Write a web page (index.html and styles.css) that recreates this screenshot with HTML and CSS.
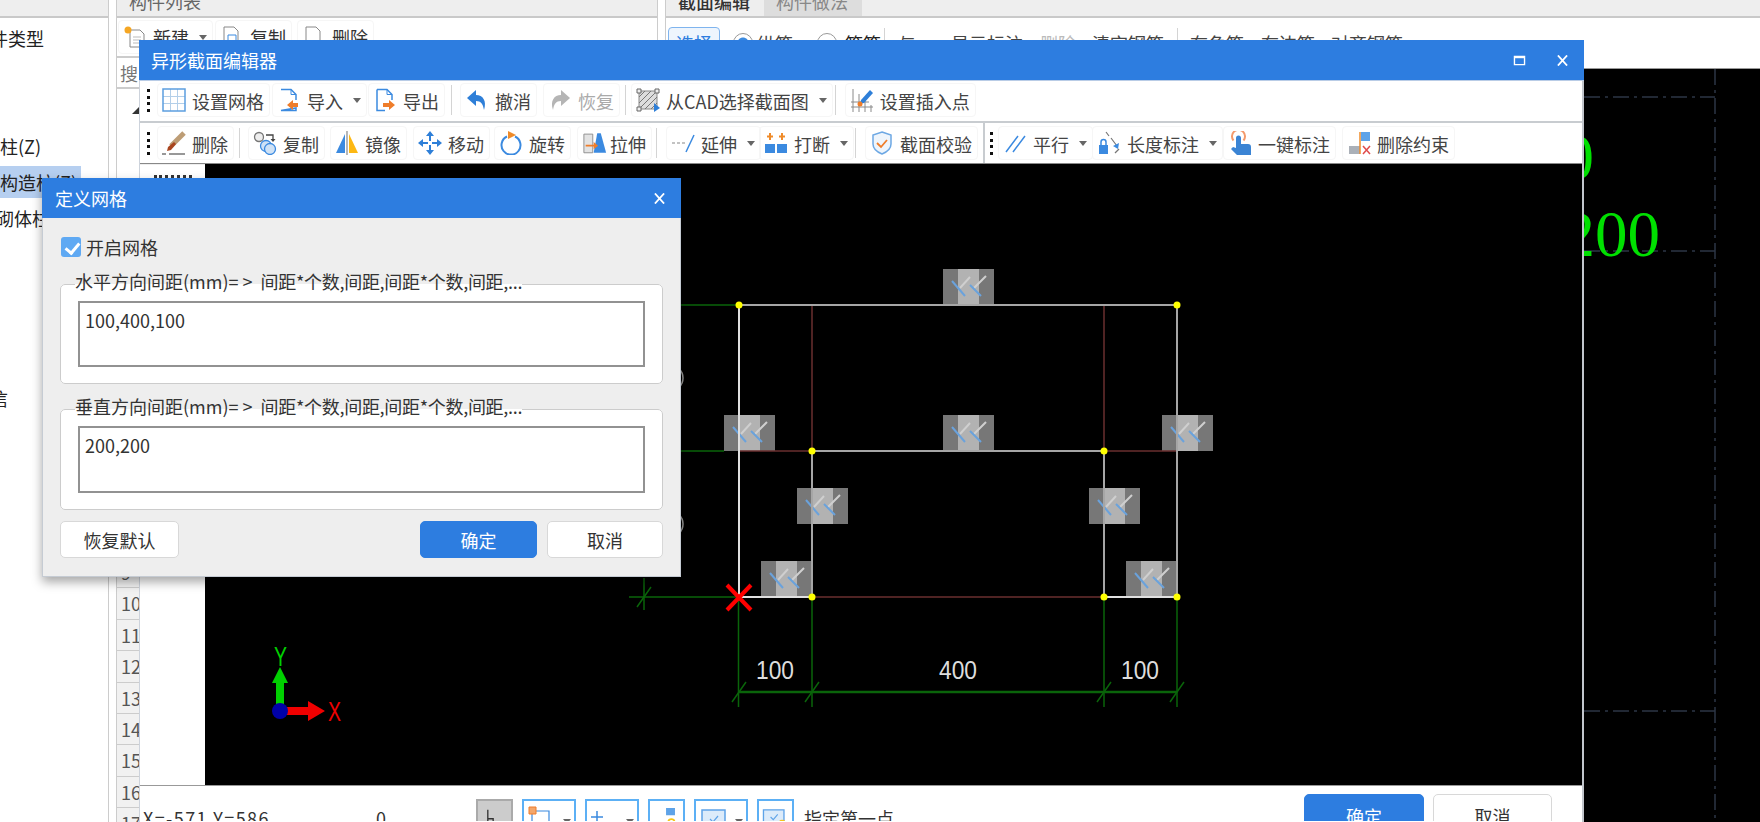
FILE: index.html
```html
<!DOCTYPE html>
<html lang="zh-CN">
<head>
    <meta charset="UTF-8">
    <title>异形截面编辑器</title>
    <link rel="stylesheet" href="styles.css">
</head>
<body>
    <!-- Main application behind the two dialogs -->
    <div class="app">
        <div class="type-pane">
            <div class="pane-head"></div>
            <div class="tree">
                <div class="tree-row"><span class="cut-28">构件类型</span></div>
                <div class="tree-row"></div>
                <div class="tree-row"></div>
                <div class="tree-row">柱(Z)</div>
                <div class="tree-row"><span class="tree-sel">构造柱(Z)</span></div>
                <div class="tree-row"><span class="cut-4">砌体柱(Z)</span></div>
                <div class="tree-row"></div>
                <div class="tree-row"></div>
                <div class="tree-row"></div>
                <div class="tree-row"></div>
                <div class="tree-row"><span class="cut-10">信</span></div>
            </div>
        </div>

        <div class="list-pane">
            <div class="pane-head"><span class="pane-title">构件列表</span></div>
            <div class="list-tools">
                <div class="tb-btn">
                    <svg class="icon" viewBox="0 0 24 24"><path d="M7 5h10l4 4v13H7z" fill="#fff" stroke="#888"/><path d="M10 12h8M10 15h8M10 18h8" stroke="#bbb"/><circle cx="5" cy="5" r="3.5" fill="#f5a623"/></svg>
                    <span>新建</span><i class="caret"></i>
                </div>
                <div class="tb-btn ml2">
                    <svg class="icon" viewBox="0 0 24 24"><path d="M4 2h10l4 4v16H4z" fill="#fff" stroke="#888"/><path d="M8 10h8v10H8z" fill="#fff" stroke="#3b8ae0"/></svg>
                    <span>复制</span>
                </div>
                <div class="tb-btn ml5">
                    <svg class="icon" viewBox="0 0 24 24"><path d="M4 2h10l4 4v16H4z" fill="#fff" stroke="#888"/><path d="M10 19h10" stroke="#e04b4b" stroke-width="3"/></svg>
                    <span>删除</span>
                </div>
            </div>
            <div class="search-row">搜</div>
            <div class="tree-top"><i class="tree-arrow"></i></div>
            <div class="num-row">9</div>
            <div class="num-row">10</div>
            <div class="num-row">11</div>
            <div class="num-row">12</div>
            <div class="num-row">13</div>
            <div class="num-row">14</div>
            <div class="num-row">15</div>
            <div class="num-row">16</div>
            <div class="num-row">17</div>
        </div>

        <div class="section-pane">
            <div class="pane-head tabs">
                <span class="tab tab-on">截面编辑</span>
                <span class="tab">构件做法</span>
            </div>
            <div class="section-tools">
                <span class="pick-btn">选择</span>
                <i class="radio radio-on"></i><span>纵筋</span>
                <i class="radio radio-b"></i><span class="ml8b">箍筋</span>
                <i class="v-sep sep-a"></i>
                <span class="ml13">与</span>
                <span class="ml35">显示标注</span>
                <span class="ml17 muted">删除</span>
                <span class="ml16">清空钢筋</span>
                <i class="v-sep sep-b"></i>
                <span class="ml12">布角筋</span>
                <span class="ml17">布边筋</span>
                <span class="ml16">对齐钢筋</span>
            </div>
            <div class="back-canvas">
                <svg class="back-drawing" viewBox="1584 68 176 754">
                    <path class="axis-line" d="M1584 96H1715M1584 250H1715M1584 710H1715M1715 68V822"/>
                    <text class="cad-num" x="1594" y="178" text-anchor="end">0</text>
                    <text class="cad-num" x="1660" y="255" text-anchor="end">200</text>
                </svg>
            </div>
        </div>
    </div>

    <!-- 异形截面编辑器 window -->
    <div class="editor">
        <div class="title-bar">
            <span>异形截面编辑器</span>
            <span class="win-btns">
                <svg class="win-icon" viewBox="0 0 14 12"><path d="M1.5 1.5h11v9h-11z" fill="none" stroke="#fff" stroke-width="1.5"/><path d="M1 2.5h12" stroke="#fff" stroke-width="2"/></svg>
                <svg class="win-icon" viewBox="0 0 14 12"><path d="M2 0.5l10 11M12 0.5l-10 11" stroke="#fff" stroke-width="2"/></svg>
            </span>
        </div>

        <div class="toolbar bar-one">
            <i class="grip"></i>
            <div class="tb-btn">
                <svg class="icon" viewBox="0 0 24 24"><path d="M8.5 1v22M15.5 1v22M1 8.5h22M1 15.5h22" stroke="#b3cfe9"/><path d="M1 1h22v22H1z" fill="none" stroke="#5c9fdf" stroke-width="1.5"/></svg>
                <span>设置网格</span>
            </div>
            <div class="tb-btn ml2">
                <svg class="icon" viewBox="0 0 24 24"><path d="M4 1.500h10l5 5V12M19 20v2.500H4z" fill="none" stroke="#3b8ae0" stroke-width="1.5"/><path d="M14 1.500v5h5" fill="none" stroke="#3b8ae0"/><path d="M21 15h-5v-3l-6 5 6 5v-3h5z" fill="#ef7d2a"/></svg>
                <span>导入</span><i class="caret"></i>
            </div>
            <div class="tb-btn ml1">
                <svg class="icon" viewBox="0 0 24 24"><path d="M4 1.500h10l5 5V12M12 22.500H4v-21" fill="none" stroke="#3b8ae0" stroke-width="1.500"/><path d="M14 1.500v5h5" fill="none" stroke="#3b8ae0"/><path d="M10 15h6v-3l6 5-6 5v-3h-6z" fill="#ef7d2a"/></svg>
                <span>导出</span>
            </div>
            <i class="v-sep tb-sep sep-1"></i>
            <div class="tb-btn">
                <svg class="icon" viewBox="0 0 24 24"><path d="M11 2L2 10l9 8v-5c5 0 7 3 8 9 3-9-1-15-8-15z" fill="#2e7fd8"/></svg>
                <span>撤消</span>
            </div>
            <div class="tb-btn ml6 off">
                <svg class="icon" viewBox="0 0 24 24"><path d="M13 2l9 8-9 8v-5c-5 0-7 3-8 9-3-9 1-15 8-15z" fill="#b5b5b5"/></svg>
                <span>恢复</span>
            </div>
            <i class="v-sep tb-sep sep-2"></i>
            <div class="tb-btn">
                <svg class="icon" viewBox="0 0 24 24"><path d="M3 3h18v18H3z" fill="#ddd" stroke="#888"/><path d="M3 9l6-6M3 15L15 3M3 21L21 3M9 21L21 9M15 21l6-6" stroke="#777"/><path d="M1 1h4v4H1zM19 1h4v4h-4zM1 19h4v4H1z" fill="#eee" stroke="#666"/><path d="M18 15l6 5-6 4z" fill="#2e7fd8"/></svg>
                <span>从CAD选择截面图</span><i class="caret"></i>
            </div>
            <i class="v-sep tb-sep sep-3"></i>
            <div class="tb-btn">
                <svg class="icon" viewBox="0 0 24 24"><path d="M3 1v23M9 6v18M1 14h18M1 19h22M15 13v11M21 17v7" stroke="#8a8a8a"/><path d="M20 2l3 3-9 10-4 1 1-4z" fill="#2e7fd8"/><circle cx="10" cy="16" r="2.500" fill="#ef7d2a"/></svg>
                <span>设置插入点</span>
            </div>
        </div>

        <div class="toolbar bar-two">
            <i class="grip"></i>
            <div class="tb-btn">
                <svg class="icon" viewBox="0 0 24 24"><path d="M22 2L9 15" stroke="#bd9d75" stroke-width="5"/><path d="M12 11l2 2-5 6-4 1 1-4z" fill="#a9451f"/><path d="M0 23h4M7 23h16" stroke="#333" stroke-width="1.200"/></svg>
                <span>删除</span>
            </div>
            <i class="v-sep tb-sep sep-4"></i>
            <div class="tb-btn ml1">
                <svg class="icon" viewBox="0 0 24 24"><circle cx="6" cy="6" r="4.500" fill="#eee" stroke="#777" stroke-width="1.300"/><path d="M13 4h7v4" fill="none" stroke="#444" stroke-width="1.300"/><path d="M17.500 8h5L20 11z" fill="#444"/><circle cx="13" cy="15" r="5.500" fill="#cfe2f6" stroke="#3b8ae0" stroke-width="1.300"/><circle cx="17" cy="18" r="5.500" fill="#cfe2f6" stroke="#3b8ae0" stroke-width="1.300"/></svg>
                <span>复制</span>
            </div>
            <div class="tb-btn ml5">
                <svg class="icon" viewBox="0 0 24 24"><path d="M10 3v19H1z" fill="#3b8ae0"/><path d="M14 3v19h9z" fill="#fdb813"/><path d="M12 0v24" stroke="#888" stroke-width="1.200"/></svg>
                <span>镜像</span>
            </div>
            <div class="tb-btn ml6">
                <svg class="icon" viewBox="0 0 24 24"><path d="M12 0l4 5h-3v5h-2V5H8zM12 24l-4-5h3v-5h2v5h3zM0 12l5-4v3h5v2H5v3zM24 12l-5 4v-3h-5v-2h5V8z" fill="#2e7fd8"/></svg>
                <span>移动</span>
            </div>
            <div class="tb-btn ml4">
                <svg class="icon" viewBox="0 0 24 24"><path d="M8 5.500a9.500 9.500 0 1 0 8 0" fill="none" stroke="#3b8ae0" stroke-width="2"/><path d="M9 0l8 4-8 4z" fill="#ef8b2a"/></svg>
                <span>旋转</span>
            </div>
            <div class="tb-btn ml6">
                <svg class="icon icon-wide" viewBox="0 0 27 24"><path d="M1 2h10v21H1z" fill="#e3e3e3" stroke="#888"/><path d="M16 1h4l6 22H12z" fill="#3b8ae0"/><path d="M3 14h9v-3l5 4-5 4v-3H3z" fill="#ef7d2a"/></svg>
                <span>拉伸</span>
            </div>
            <i class="v-sep tb-sep sep-5"></i>
            <div class="tb-btn">
                <svg class="icon" viewBox="0 0 24 24"><path d="M1 12h14" stroke="#888" stroke-width="1.200" stroke-dasharray="3 2"/><path d="M23 4L15 21" stroke="#3b8ae0" stroke-width="1.500"/></svg>
                <span>延伸</span><i class="caret"></i>
            </div>
            <div class="tb-btn ml-2">
                <svg class="icon" viewBox="0 0 24 24"><path d="M1 13h10v9H1zM13 13h10v9H13z" fill="#3b8ae0"/><path d="M6 2v7M3 5.500h6M18 2v7M15 5.500h6" stroke="#ef8b2a" stroke-width="2"/></svg>
                <span>打断</span><i class="caret"></i>
            </div>
            <i class="v-sep tb-sep sep-6"></i>
            <div class="tb-btn">
                <svg class="icon" viewBox="0 0 24 24"><path d="M12 1l9 3v9c0 5-4 8-9 10-5-2-9-5-9-10V4z" fill="#eef5fc" stroke="#6da8e4" stroke-width="1.500"/><path d="M7 12l4 4 6-7" fill="none" stroke="#ef7d2a" stroke-width="1.800"/></svg>
                <span>截面校验</span>
            </div>
            <i class="bar-split"></i>
            <i class="grip"></i>
            <div class="tb-btn">
                <svg class="icon" viewBox="0 0 24 24"><path d="M3 21L15 5M10 21L22 5" stroke="#3b8ae0" stroke-width="1.500"/></svg>
                <span>平行</span><i class="caret"></i>
            </div>
            <div class="tb-btn ml-1">
                <svg class="icon" viewBox="0 0 24 24"><path d="M2 14h9v9H2z" fill="#3b8ae0"/><path d="M4 14v-3a2.500 2.500 0 0 1 5 0v3" fill="none" stroke="#3b8ae0" stroke-width="1.500"/><path d="M9 1l3 4M14 7l6 8" stroke="#777" stroke-width="1.200"/><path d="M22 12l-1 6-5-3z" fill="#3b8ae0"/><path d="M18 22l4-4" stroke="#777" stroke-width="1.200"/></svg>
                <span>长度标注</span><i class="caret"></i>
            </div>
            <div class="tb-btn">
                <svg class="icon" viewBox="0 0 24 24"><path d="M5.500 9.500a6.500 6.500 0 1 1 10 0" fill="none" stroke="#f49a6c" stroke-width="2"/><path d="M8 7a2.500 2.500 0 0 1 5 0v6h7c2 0 3 1 3 3v8H9l-6-6 2-2 3 1z" fill="#3b84d4"/></svg>
                <span>一键标注</span>
            </div>
            <div class="tb-btn ml6">
                <svg class="icon" viewBox="0 0 24 24"><path d="M2 15h11v8H2z" fill="#aab0b8"/><path d="M13 1v22" stroke="#ef8b2a" stroke-width="1.500"/><path d="M14 1h9v9h-9z" fill="#5ea3e8"/><path d="M16 15l7 8M23 15l-7 8" stroke="#e04b4b" stroke-width="1.500"/></svg>
                <span>删除约束</span>
            </div>
        </div>

        <div class="work-area">
            <div class="side-strip"><i class="side-dots"></i></div>
            <svg class="drawing" viewBox="205 164 1377 621">
                <defs>
                    <g id="tile">
                        <rect width="51" height="36" fill="#777"/>
                        <rect x="15" width="21" height="36" fill="#b2b2b2"/>
                        <path d="M17 19L27 8M31 19L43 7" stroke="#cfcfcf" stroke-width="2"/>
                        <path d="M9 12L22 27M27 16L38 27" stroke="#6aa2dc" stroke-width="2"/>
                    </g>
                </defs>

                <use href="#tile" x="943" y="269"/>
                <use href="#tile" x="724" y="415"/>
                <use href="#tile" x="943" y="415"/>
                <use href="#tile" x="1162" y="415"/>
                <use href="#tile" x="797" y="488"/>
                <use href="#tile" x="1089" y="488"/>
                <use href="#tile" x="761" y="561"/>
                <use href="#tile" x="1126" y="561"/>

                <!-- dimension lines -->
                <path class="dim" d="M600 305H739M600 451H724M629 597H739M644 578V610M738.500 597V707M812 597V707M1104 597V707M1177 597V707"/>
                <path class="dim dim-main" d="M739 692H1177"/>
                <path class="dim" d="M732 702L746 682M805 702L819 682M1097 702L1111 682M1170 702L1184 682M637 607L651 587"/>

                <!-- section outline -->
                <path class="rebar" d="M812 305V451M1104 305V451M739 451H812M1104 451H1177M812 597H1104"/>
                <path class="edge" d="M739 305H1177M1177 305V597M812 451H1104M812 451V597M1104 451V597"/>
                <path class="edge-light" d="M739 305V597M739 597H812M1104 597H1177"/>

                <g class="node">
                    <circle cx="739" cy="305" r="3.500"/>
                    <circle cx="1177" cy="305" r="3.500"/>
                    <circle cx="812" cy="451" r="3.500"/>
                    <circle cx="1104" cy="451" r="3.500"/>
                    <circle cx="812" cy="597" r="3.500"/>
                    <circle cx="1104" cy="597" r="3.500"/>
                    <circle cx="1177" cy="597" r="3.500"/>
                </g>

                <path class="origin" d="M727 585L751 610M751 585L727 610"/>

                <text class="dim-text" x="756" y="679" textLength="38" lengthAdjust="spacingAndGlyphs">100</text>
                <text class="dim-text" x="939" y="679" textLength="38" lengthAdjust="spacingAndGlyphs">400</text>
                <text class="dim-text" x="1121" y="679" textLength="38" lengthAdjust="spacingAndGlyphs">100</text>

                <circle class="bubble" cx="670" cy="378" r="13"/>
                <circle class="bubble" cx="670" cy="524" r="13"/>

                <!-- axis marker -->
                <path d="M276 711V683H272L280 667L288 683H284V711z" fill="#00d000"/>
                <path d="M280 707H308V701L325 711L308 721V715H280z" fill="#f00000"/>
                <ellipse cx="280" cy="711" rx="8" ry="8" fill="#0000a8"/>
                <text class="axis-y" x="274" y="666" textLength="13" lengthAdjust="spacingAndGlyphs">Y</text>
                <text class="axis-x" x="328" y="721" textLength="13" lengthAdjust="spacingAndGlyphs">X</text>
            </svg>
        </div>

        <div class="status-bar">
            <span class="coords">X=-571 Y=586</span>
            <span class="zero">0</span>
            <div class="mode-btn mode-on">
                <svg class="mode-icon" viewBox="0 0 37 24"><path d="M11 4V20M11 14h6v8" fill="none" stroke="#333" stroke-width="1.500"/></svg>
            </div>
            <div class="mode-btn mode-wide">
                <svg class="mode-icon" viewBox="0 0 50 24"><path d="M8 6h17v18H8z" fill="none" stroke="#3b8ae0" stroke-width="1.200"/><path d="M5 2h7v7H5z" fill="#f3a66b" stroke="#ef7d2a"/></svg>
                <i class="caret"></i>
            </div>
            <div class="mode-btn mode-wide">
                <svg class="mode-icon" viewBox="0 0 50 24"><path d="M10 6v12M4 12h12" stroke="#3b8ae0" stroke-width="1.500"/><path d="M14 19h16v6H14z" fill="#5ea3e8"/></svg>
                <i class="caret"></i>
            </div>
            <div class="mode-btn">
                <svg class="mode-icon" viewBox="0 0 37 24"><path d="M18 2h10v8H18zM8 18h12v8H8z" fill="#5ea3e8"/><circle cx="24" cy="18" r="3.500" fill="#fff" stroke="#f5c518" stroke-width="2"/></svg>
            </div>
            <div class="mode-btn mode-wide">
                <svg class="mode-icon" viewBox="0 0 50 24"><path d="M6 5h23v18H6z" fill="#dcebfa" stroke="#5ea3e8" stroke-width="1.500"/><path d="M14 14l3 3 5-6" fill="none" stroke="#5ea3e8" stroke-width="1.200"/></svg>
                <i class="caret"></i>
            </div>
            <div class="mode-btn">
                <svg class="mode-icon" viewBox="0 0 37 24"><path d="M5 4h23v18H5z" fill="#dcebfa" stroke="#5ea3e8" stroke-width="1.500"/><path d="M13 12l3 3 5-6" fill="none" stroke="#5ea3e8" stroke-width="1.200"/><circle cx="26" cy="19" r="4" fill="#f5c518"/></svg>
            </div>
            <span class="prompt">指定第一点</span>
            <button class="btn btn-primary foot-btn foot-ok">确定</button>
            <button class="btn foot-btn foot-no">取消</button>
        </div>
    </div>

    <!-- 定义网格 dialog -->
    <div class="grid-dialog">
        <div class="dialog-title">
            <span>定义网格</span>
            <svg class="win-icon" viewBox="0 0 14 12"><path d="M2 0.500l10 11M12 0.500l-10 11" stroke="#fff" stroke-width="2"/></svg>
        </div>
        <div class="dialog-body">
            <label class="check-row"><i class="check-box"></i>开启网格</label>
            <fieldset class="group group-h">
                <legend>水平方向间距(mm)= &gt;&nbsp; <span class="legend-tail">间距*个数,间距,间距*个数,间距,...</span></legend>
                <textarea class="grid-input">100,400,100</textarea>
            </fieldset>
            <fieldset class="group group-v">
                <legend>垂直方向间距(mm)= &gt;&nbsp; <span class="legend-tail">间距*个数,间距,间距*个数,间距,...</span></legend>
                <textarea class="grid-input">200,200</textarea>
            </fieldset>
            <div class="dialog-foot">
                <button class="btn reset-btn">恢复默认</button>
                <button class="btn btn-primary ok-btn">确定</button>
                <button class="btn cancel-btn">取消</button>
            </div>
        </div>
    </div>
</body>
</html>
```

FILE: styles.css
```css
* {
    box-sizing: border-box;
}
html, body {
    margin: 0;
    height: 100%;
}
body {
    font-family: "Noto Sans CJK SC", "Noto Sans", sans-serif;
    font-size: 18px;
    color: #333;
    background: #fff;
    overflow: hidden;
    position: relative;
}
i {
    display: block;
    font-style: normal;
}

/* Main application */
.app {
    display: flex;
    height: 822px;
    overflow: hidden;
}
.pane-head {
    height: 18px;
    flex: none;
    overflow: hidden;
    background: #eee;
    border-bottom: 2px solid #c9c9c9;
}
.type-pane {
    width: 109px;
    flex: none;
    border-right: 1px solid #ccc;
}
.tree {
    padding-top: 2px;
}
.tree-row {
    height: 36px;
    display: flex;
    align-items: center;
    white-space: nowrap;
    color: #222;
}
.tree-sel {
    display: block;
    width: 81px;
    height: 32px;
    line-height: 32px;
    overflow: hidden;
    background: #b6cff0;
}
.cut-4 {
    margin-left: -4px;
}
.cut-10 {
    margin-left: -10px;
}
.cut-28 {
    margin-left: -28px;
}

.list-pane {
    width: 542px;
    flex: none;
    margin-left: 7px;
    border-left: 1px solid #ccc;
    border-right: 1px solid #ccc;
    overflow: hidden;
}
.pane-title {
    display: block;
    line-height: 2px;
    margin-left: 12px;
    color: #666;
}
.list-tools {
    height: 40px;
    display: flex;
    align-items: center;
    padding-left: 1px;
    border-bottom: 2px solid #ccc;
}
.search-row {
    height: 31px;
    padding-left: 3px;
    line-height: 30px;
    color: #777;
    border-bottom: 2px solid #ccc;
}
.tree-top {
    height: 468px;
    position: relative;
}
.tree-arrow {
    position: absolute;
    left: 15px;
    top: 18px;
    border-style: solid;
    border-width: 0 0 7px 7px;
    border-color: transparent transparent #333 transparent;
}
.num-row {
    height: 31.400px;
    width: 40px;
    padding-left: 4px;
    line-height: 30px;
    background: #f1f1f1;
    border-bottom: 1px solid #ccc;
    color: #555;
}

.section-pane {
    flex: 1;
    margin-left: 7px;
    display: flex;
    flex-direction: column;
    border-left: 1px solid #ccc;
}
.tabs {
    display: flex;
}
.tab {
    width: 98px;
    height: 16px;
    line-height: 2px;
    padding-left: 12px;
    background: #ddd;
    color: #888;
    overflow: hidden;
}
.tab-on {
    background: #eee;
    color: #333;
    font-weight: 500;
}
.section-tools {
    height: 50px;
    display: flex;
    align-items: center;
    flex: none;
    padding-left: 2px;
    white-space: nowrap;
    color: #444;
}
.pick-btn {
    width: 52px;
    height: 32px;
    line-height: 30px;
    text-align: center;
    color: #2d7de0;
    background: #eef5fd;
    border: 1px solid #7fb4ee;
    border-radius: 4px;
}
.radio {
    width: 20px;
    height: 20px;
    margin: 0 4px 0 13px;
    border: 1px solid #999;
    border-radius: 50%;
}
.radio-on {
    background: radial-gradient(circle, #3b8ae0 0 5px, #fff 6px);
}
.radio-b {
    margin-left: 24px;
}
.ml8b {
    margin-left: 4px;
    color: #222;
}
.sep-a {
    margin-left: 3px;
}
.sep-b {
    margin-left: 13px;
}
.ml12 {
    margin-left: 12px;
}
.ml13 {
    margin-left: 13px;
}
.ml16 {
    margin-left: 16px;
}
.ml17 {
    margin-left: 17px;
}
.ml35 {
    margin-left: 35px;
}
.muted {
    color: #bbb;
}
.v-sep {
    width: 1px;
    height: 30px;
    flex: none;
    background: #d4d4d4;
}
.back-canvas {
    flex: 1;
    background: #000;
    position: relative;
    border-top: 1px solid #999;
}
.back-drawing {
    position: absolute;
    right: 0;
    top: 0;
    width: 176px;
    height: 754px;
}
.axis-line {
    fill: none;
    stroke: #2c3646;
    stroke-width: 1.500;
    stroke-dasharray: 16 5 3 5;
}
.cad-num {
    font-family: "Liberation Serif", serif;
    font-size: 65px;
    fill: #00e000;
}

/* Editor window */
.editor {
    position: absolute;
    left: 139px;
    top: 40px;
    width: 1445px;
    height: 782px;
    display: flex;
    flex-direction: column;
    background: #fff;
    border-left: 1px solid #cdd3dc;
    border-right: 2px solid #c2c6cc;
}
.title-bar {
    height: 41px;
    flex: none;
    display: flex;
    align-items: center;
    justify-content: space-between;
    padding: 0 15px 0 12px;
    margin: 0 -2px 0 -1px;
    color: #fff;
    background: #2d7de0;
    border-bottom: 1px solid #b9cce6;
}
.win-btns {
    display: flex;
    gap: 30px;
}
.win-icon {
    width: 13px;
    height: 11px;
    display: block;
}
.toolbar {
    display: flex;
    align-items: center;
    flex: none;
    padding-left: 7px;
    white-space: nowrap;
    color: #444;
}
.bar-one {
    height: 42px;
    padding-bottom: 2px;
    border-bottom: 2px solid #c8ccd0;
}
.bar-two {
    height: 41px;
    border-bottom: 1px solid #888;
}
.grip {
    width: 3px;
    height: 23px;
    flex: none;
    margin-right: 7px;
    border-left: 3px dotted #111;
}
.tb-btn {
    height: 34px;
    display: flex;
    align-items: center;
    flex: none;
    gap: 6px;
    padding: 0 6px 0 5px;
    border-radius: 4px;
    outline: 1px solid #f6f6f6;
    outline-offset: -1px;
}
.toolbar .tb-btn span {
    padding-top: 2px;
}
.icon {
    width: 24px;
    height: 24px;
    flex: none;
    display: block;
}
.icon-wide {
    margin: 0 -3px 0 1px;
}
.caret {
    width: 0;
    height: 0;
    margin-left: 4px;
    border-style: solid;
    border-width: 5px 4px 0 4px;
    border-color: #666 transparent transparent transparent;
}
.off {
    color: #aaa;
}
.ml-2 {
    margin-left: -2px;
}
.ml-1 {
    margin-left: -1px;
}
.ml1 {
    margin-left: 1px;
}
.ml2 {
    margin-left: 2px;
}
.ml4 {
    margin-left: 4px;
}
.ml5 {
    margin-left: 5px;
}
.ml6 {
    margin-left: 6px;
}
.tb-sep {
    margin: 0 6px;
}
.sep-1 {
    margin: 0 8px 0 6px;
}
.sep-2 {
    margin: 0 5px 0 5px;
}
.sep-3 {
    margin: 0 9px 0 2px;
}
.sep-4 {
    margin: 0 7px 0 5px;
}
.sep-5 {
    margin: 0 9px 0 4px;
}
.sep-6 {
    margin: 0 9px 0 1px;
}
.bar-split {
    width: 2px;
    height: 40px;
    flex: none;
    margin: 0 5px;
    background: #c8ccd0;
}
.bar-split + .grip {
    margin-right: 5px;
}
.work-area {
    height: 622px;
    flex: none;
    display: flex;
    border-bottom: 1px solid #999;
}
.side-strip {
    width: 65px;
    flex: none;
    padding: 10px 0 0 14px;
    border-top: 1px solid #eee;
}
.side-dots {
    width: 38px;
    border-top: 3px dotted #333;
}
.drawing {
    width: 1377px;
    height: 621px;
    display: block;
    flex: none;
    background: #000;
}
.dim {
    fill: none;
    stroke: #0a640a;
    stroke-width: 1.500;
}
.dim-main {
    stroke-width: 2.500;
}
.rebar {
    fill: none;
    stroke: #6a2f2f;
    stroke-width: 1.500;
}
.edge {
    fill: none;
    stroke: #a6a6a6;
    stroke-width: 2;
}
.edge-light {
    fill: none;
    stroke: #e0e0e0;
    stroke-width: 2;
}
.node circle {
    fill: #ffff00;
}
.origin {
    fill: none;
    stroke: #ff0000;
    stroke-width: 4;
}
.dim-text {
    font-family: "Liberation Sans", sans-serif;
    font-size: 26px;
    fill: #dddddd;
}
.bubble {
    fill: none;
    stroke: #999;
    stroke-width: 1.500;
}
.axis-y, .axis-x {
    font-family: "Liberation Sans", sans-serif;
    font-size: 28px;
}
.axis-y {
    fill: #00d000;
}
.axis-x {
    fill: #f00000;
}
.status-bar {
    height: 35px;
    flex: none;
    display: flex;
    align-items: flex-start;
    overflow: hidden;
    position: relative;
    padding: 13px 30px 0 3px;
    white-space: nowrap;
}
.coords {
    width: 233px;
    flex: none;
    line-height: 26px;
    margin-top: 6px;
    letter-spacing: 1.400px;
    color: #333;
}
.zero {
    width: 100px;
    flex: none;
    line-height: 26px;
    margin-top: 6px;
    color: #333;
}
.mode-btn {
    width: 37px;
    height: 40px;
    flex: none;
    margin-right: 9px;
    display: flex;
    align-items: flex-start;
    padding-top: 4px;
    border: 2px solid #5cb0f5;
}
.mode-on {
    background: #ccc;
    border-color: #aaa;
}
.mode-wide {
    width: 54px;
}
.mode-wide .caret {
    margin: 14px 0 0 -11px;
}
.mode-icon {
    display: block;
    height: 24px;
    flex: none;
}
.mode-wide .mode-icon {
    width: 50px;
}
.mode-btn:not(.mode-wide) .mode-icon {
    width: 33px;
}
.prompt {
    line-height: 26px;
    margin: 6px 0 0 1px;
}
.foot-btn {
    flex: none;
    width: 119px;
    height: 44px;
    margin-top: -5px;
}
.foot-ok {
    margin-left: auto;
    width: 120px;
}
.foot-no {
    margin-left: 9px;
}

/* Buttons shared by both dialogs */
.btn {
    display: block;
    padding: 0;
    font: inherit;
    color: #333;
    background: #fff;
    border: 1px solid #d8d8d8;
    border-radius: 5px;
}
.btn-primary {
    color: #fff;
    background: #2d7de0;
    border-color: #2d7de0;
}

/* Define-grid dialog */
.grid-dialog {
    position: absolute;
    left: 42px;
    top: 178px;
    width: 639px;
    height: 399px;
    background: #eee;
    border: 1px solid #c5cbd3;
    border-top: 0;
    box-shadow: 0 5px 10px rgba(0, 0, 0, 0.35);
}
.dialog-title {
    height: 40px;
    margin: 0 -1px;
    display: flex;
    align-items: center;
    justify-content: space-between;
    padding: 0 15px 0 13px;
    color: #fff;
    background: #2d7de0;
}
.dialog-body {
    padding: 19px 17px 0;
}
.check-row {
    height: 20px;
    display: flex;
    align-items: center;
    gap: 5px;
    margin-bottom: 14px;
    padding-left: 1px;
    color: #333;
}
.check-box {
    width: 20px;
    height: 20px;
    border-radius: 3px;
    position: relative;
    background: #5fa9f3;
}
.check-box::after {
    content: "";
    position: absolute;
    left: 7px;
    top: 3px;
    width: 6px;
    height: 11px;
    border: solid #fff;
    border-width: 0 3px 3px 0;
    transform: rotate(40deg);
}
.group {
    margin: 0;
    padding: 4px 17px 0;
    background: #fff;
    border: 1px solid #ccc;
    border-radius: 5px;
}
.group legend {
    padding: 0 0 6px;
    margin-left: -3px;
    line-height: 20px;
    white-space: nowrap;
    color: #333;
}
.legend-tail {
    letter-spacing: -0.300px;
}
.group-h {
    height: 113px;
    margin-bottom: 12px;
}
.group-v {
    height: 114px;
    margin-bottom: 11px;
}
.grid-input {
    display: block;
    width: 100%;
    height: 66px;
    padding: 4px 5px;
    resize: none;
    overflow: hidden;
    font: inherit;
    color: #333;
    border: 2px solid #929292;
    border-radius: 0;
}
.group-v .grid-input {
    height: 67px;
}
.dialog-foot {
    height: 37px;
    display: flex;
}
.reset-btn {
    width: 119px;
}
.ok-btn {
    width: 117px;
    margin-left: auto;
}
.cancel-btn {
    width: 116px;
    margin-left: 10px;
}
```
